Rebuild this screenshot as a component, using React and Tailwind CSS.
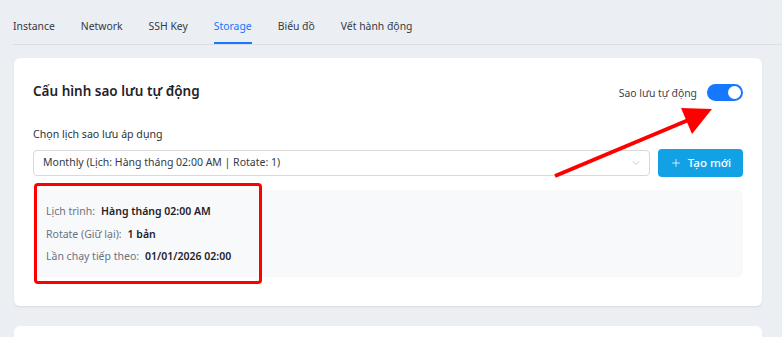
import { Plus, ChevronDown } from "lucide-react";

const tabs = ["Instance", "Network", "SSH Key", "Storage", "Biểu đồ", "Vết hành động"];

const rows = [
  { label: "Lịch trình:", value: "Hàng tháng 02:00 AM" },
  { label: "Rotate (Giữ lại):", value: "1 bản" },
  { label: "Lần chạy tiếp theo:", value: "01/01/2026 02:00" },
];

const App = () => {
  return (
    <div className="relative h-[337px] overflow-hidden bg-[#ebeef3] pl-[13px] font-['Noto_Sans',sans-serif] text-[#1f2329]">
      {/* tabs */}
      <div className="flex h-[45px] items-end gap-[26px] border-b border-[#dadee5]">
        {tabs.map((tab) => (
          <div
            key={tab}
            className={
              tab === "Storage"
                ? "border-b-2 border-[#1677ff] pb-[8px] text-[10.4px] leading-[16px] text-[#1677ff]"
                : "border-b-2 border-transparent pb-[8px] text-[10.4px] leading-[16px] text-[#333a44]"
            }
          >
            {tab}
          </div>
        ))}
      </div>

      {/* card */}
      <div className="ml-[1px] mr-[20px] mt-[13px] rounded-[6px] bg-white px-[19px] pb-[29px] pt-[22px] shadow-[0_1px_2px_rgba(0,0,0,0.08)]">
        <div className="flex items-center justify-between">
          <h2 className="text-[13.5px] font-semibold leading-[20px] text-[#1f2329]">
            Cấu hình sao lưu tự động
          </h2>
          <div className="flex items-center gap-[10px] pt-[4px]">
            <span className="text-[10.4px] leading-[16px] text-[#3b4350]">Sao lưu tự động</span>
            <div className="flex h-[17px] w-[36px] items-center justify-end rounded-full bg-[#1677ff] pr-[2px]">
              <div className="h-[13px] w-[13px] rounded-full bg-white" />
            </div>
          </div>
        </div>

        <div className="mt-[25px] text-[10.6px] leading-[16px] text-[#2b313b]">
          Chọn lịch sao lưu áp dụng
        </div>

        <div className="mt-[7px] flex items-center gap-[8px]">
          <div className="flex h-[26px] flex-1 items-center justify-between rounded-[4px] border border-[#d9d9d9] bg-white pl-[9px] pr-[7px]">
            <span className="text-[10.5px] text-[#333a44]">
              Monthly (Lịch: Hàng tháng 02:00 AM | Rotate: 1)
            </span>
            <ChevronDown className="h-[12px] w-[12px] text-[#b4b8bf]" strokeWidth={1.5} />
          </div>
          <button className="flex h-[28px] w-[85px] items-center justify-center gap-[6px] rounded-[4px] bg-[#13a1e6] text-[11.5px] font-medium text-white">
            <Plus className="h-[12px] w-[12px]" strokeWidth={1.5} />
            Tạo mới
          </button>
        </div>

        <div className="relative mt-[13px] flex flex-col gap-[6.5px] rounded-[6px] bg-[#f8f9fb] pb-[13px] pl-[13px] pt-[13px]">
          {rows.map((row) => (
            <div key={row.label} className="flex gap-[6px] text-[10.5px] leading-[16px]">
              <span className="text-[#6b7280]">{row.label}</span>
              <span className="font-semibold text-[#1f2329]">{row.value}</span>
            </div>
          ))}
          <div className="pointer-events-none absolute left-[1px] top-[-7px] h-[101px] w-[228px] rounded-[4px] border-[3px] border-[#ff0000]" />
        </div>
      </div>

      {/* second card */}
      <div className="ml-[1px] mr-[20px] mt-[20px] h-[40px] rounded-[6px] bg-white" />

      {/* annotation arrow */}
      <svg className="pointer-events-none absolute left-0 top-0" width="782" height="337">
        <line x1="555" y1="176" x2="698" y2="116" stroke="#ff0000" strokeWidth="4" />
        <polygon points="681,108 712,109 692,134" fill="#ff0000" />
      </svg>
    </div>
  );
};

export default App;
